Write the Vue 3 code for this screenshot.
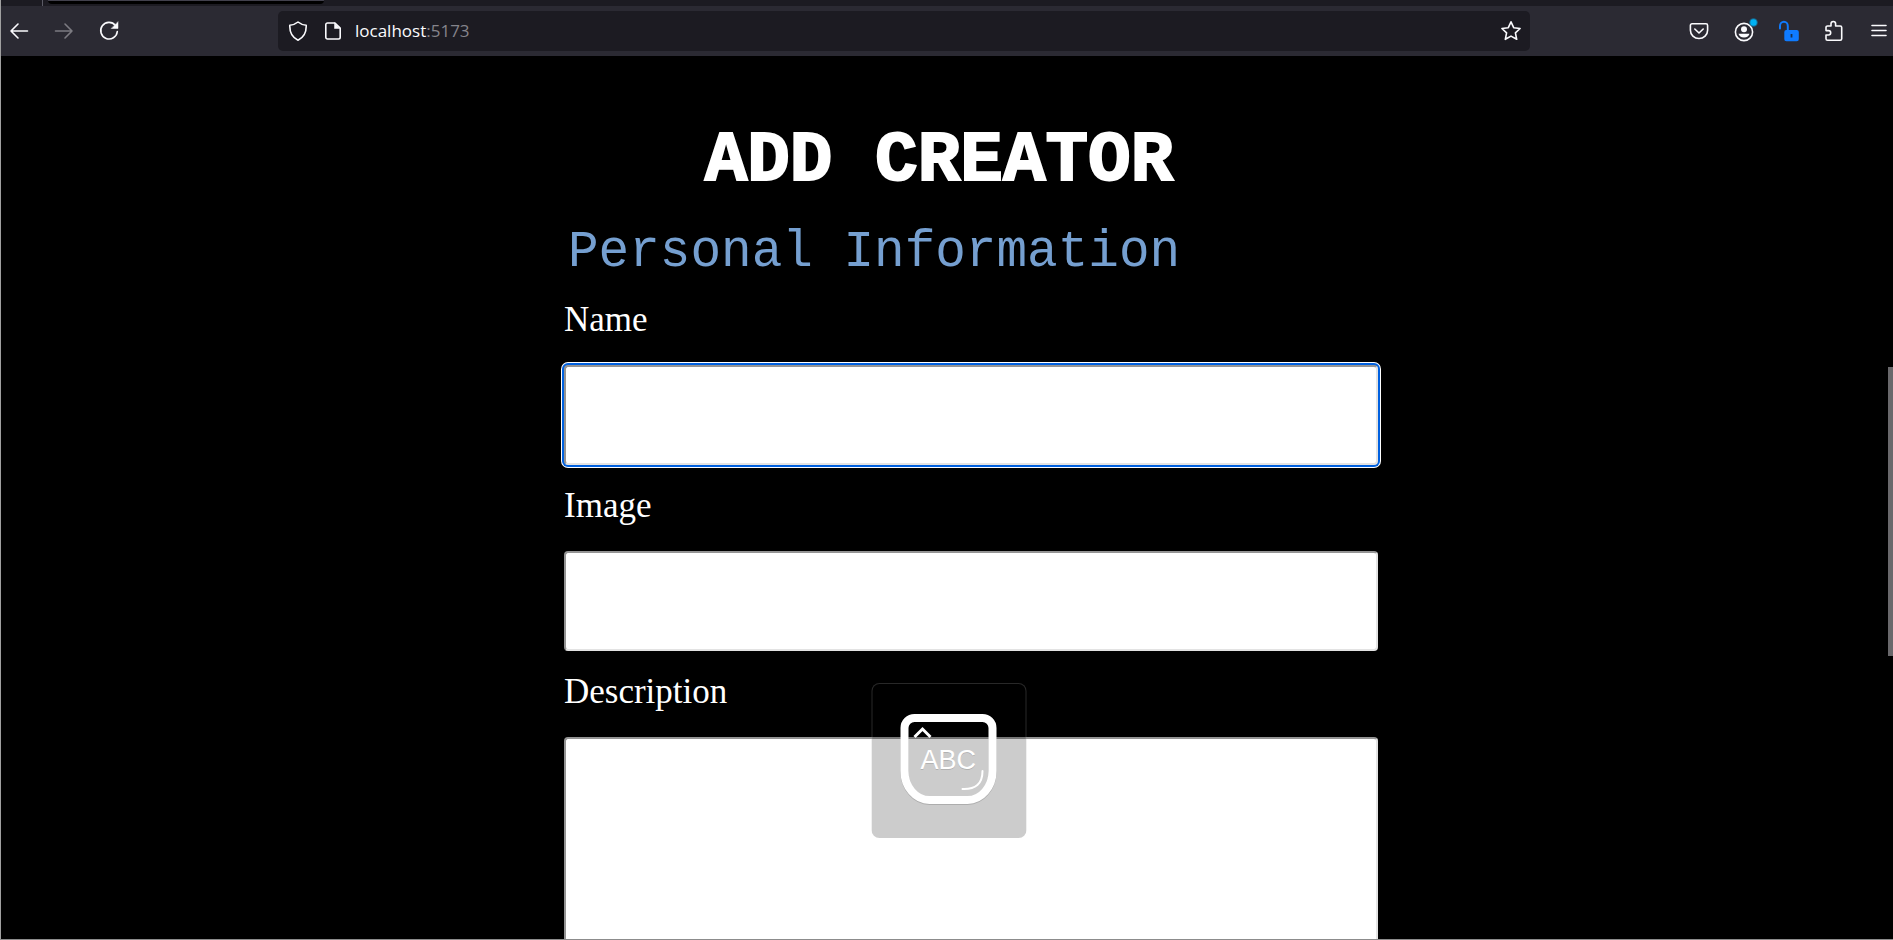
<script setup>
import { ref } from 'vue'

const name = ref('')
const image = ref('')
const description = ref('')
const active = ref('name')
</script>

<template>
  <div class="window">
    <div class="tabstrip">
      <div class="pinned"></div>
      <div class="tab"></div>
    </div>

    <nav class="toolbar" aria-label="Browser toolbar">
      <div class="group">
        <button type="button" aria-label="Back">
          <svg width="20" height="20" viewBox="0 0 20 20" class="line"><path d="M18.5 10H2M9 3L2 10l7 7" /></svg>
        </button>
        <button type="button" aria-label="Forward" disabled>
          <svg width="20" height="20" viewBox="0 0 20 20" class="line"><path d="M1.5 10H18M11 3l7 7-7 7" /></svg>
        </button>
        <button type="button" aria-label="Reload">
          <svg width="20" height="20" viewBox="0 0 20 20" class="line">
            <path d="M16.5 4.5A8.3 8.3 0 1 0 18.3 10.5" />
            <path d="M19 1v6.5h-6.5z" class="solid" />
          </svg>
        </button>
      </div>

      <div class="address">
        <svg width="20" height="20" viewBox="0 0 20 20" class="line">
          <path d="M10 1c2.300 1.900 5 2.900 8.200 3.200C18.500 11 16 16.500 10 19.200 4 16.500 1.500 11 1.800 4.200 5 3.900 7.700 2.900 10 1z" />
        </svg>
        <svg width="20" height="20" viewBox="0 0 20 20" class="line">
          <path d="M12 2H4.500A1.700 1.700 0 0 0 2.800 3.700v12.600A1.700 1.700 0 0 0 4.500 18h11a1.700 1.700 0 0 0 1.700-1.700V7z" />
          <path d="M11.500 2v5.500H17z" class="solid" />
        </svg>
        <span class="url">localhost<span class="port">:5173</span></span>
        <button type="button" aria-label="Bookmark this page">
          <svg width="22" height="22" viewBox="0 0 22 22" class="line">
            <path d="M11 1.800l2.700 5.900 6.400.8-4.700 4.400 1.300 6.400-5.700-3.200-5.700 3.200 1.300-6.400-4.700-4.400 6.400-.8z" />
          </svg>
        </button>
      </div>

      <div class="group">
        <button type="button" aria-label="Save to Pocket">
          <svg width="20" height="20" viewBox="0 0 20 20" class="line">
            <path d="M3 2.800h14a1.600 1.600 0 0 1 1.600 1.600v4.800a8.600 8.300 0 0 1-17.200 0V4.400A1.600 1.600 0 0 1 3 2.800z" />
            <path d="M5.800 8l4.200 4 4.200-4" />
          </svg>
        </button>
        <button type="button" aria-label="Account">
          <svg width="28" height="28" viewBox="0 0 28 28" class="line">
            <circle cx="14" cy="15" r="8.600" />
            <circle cx="14" cy="12.300" r="3" class="fill" />
            <path d="M8.500 16.800h11a5.600 4.500 0 0 1-11 0z" class="fill" />
            <circle cx="23.500" cy="5.500" r="4.300" class="halo" />
            <circle cx="23.500" cy="5.500" r="3.200" class="dot" />
          </svg>
        </button>
        <button type="button" aria-label="Unlocked">
          <svg width="22" height="22" viewBox="0 0 22 22" class="lock">
            <path d="M2 8.500V6a3.700 4 0 0 1 7.800 0v5" />
            <rect x="7.300" y="11" width="12.500" height="9.300" rx="1" />
            <path d="M13.500 14v3.500" class="keyhole" />
          </svg>
        </button>
        <button type="button" aria-label="Extensions">
          <svg width="22" height="22" viewBox="0 0 22 22" class="line">
            <path d="M3 7.500A1.500 1.500 0 0 1 4.500 6H8V3.800a2.300 2.300 0 0 1 4.600 0V6h4.600a1.500 1.500 0 0 1 1.500 1.500v11.300a1.500 1.500 0 0 1-1.500 1.500H4.500A1.500 1.500 0 0 1 3 18.800V15h2.500a2.200 2.200 0 0 0 0-4.400H3z" />
          </svg>
        </button>
        <button type="button" aria-label="Open application menu">
          <svg width="16" height="16" viewBox="0 0 16 16" class="line"><path d="M1 2.500h14M1 7.500h14M1 12.500h14" /></svg>
        </button>
      </div>
    </nav>

    <main class="page">
      <form @submit.prevent>
        <h1>ADD CREATOR</h1>
        <h2>Personal Information</h2>

        <label for="creator-name">Name</label>
        <input id="creator-name" v-model="name" type="text" :class="{ active: active === 'name' }" @focus="active = 'name'" />

        <label for="creator-image">Image</label>
        <input id="creator-image" v-model="image" type="text" :class="{ active: active === 'image' }" @focus="active = 'image'" />

        <label for="creator-description">Description</label>
        <textarea id="creator-description" v-model="description" :class="{ active: active === 'description' }" @focus="active = 'description'"></textarea>
      </form>
      <div class="scroll-thumb"></div>
    </main>

    <div class="caps-notice">
      <svg width="102" height="98" viewBox="0 0 102 98">
        <path class="key-shadow" d="M17 8h68a10 10 0 0 1 10 10v43a25 29 0 0 1-25 29H32A25 29 0 0 1 7 61V18a10 10 0 0 1 10-10z" />
        <path class="key" d="M17 7h68a10 10 0 0 1 10 10v43a25 29 0 0 1-25 29H32A25 29 0 0 1 7 60V17a10 10 0 0 1 10-10z" />
        <path class="caret" d="M17 26l8-8 8 8" />
        <text x="23" y="59" class="abc shade">ABC</text>
        <text x="23" y="58" class="abc">ABC</text>
        <path class="shine" d="M85 60c0 13-7 18.500-20 18" />
      </svg>
    </div>
  </div>
</template>

<style>
body {
  margin: 0;
  background: #000;
}
</style>

<style scoped>
.window {
  box-sizing: border-box;
  position: relative;
  display: flex;
  flex-direction: column;
  height: 100vh;
  overflow: hidden;
  background: #000;
  border-bottom: 1px solid #8c8c8c;
}
.window::before {
  content: '';
  position: absolute;
  z-index: 1;
  inset: 0 auto 0 0;
  width: 1px;
  background: #a0a0a0;
}
.tabstrip {
  display: flex;
  flex: none;
  gap: 5px;
  height: 6px;
  background: #1c1b22;
}
.pinned {
  width: 42px;
  border-right: 1px solid #5b5b66;
}
.tab {
  box-sizing: border-box;
  width: 276px;
  height: 4px;
  background: #000;
  border-top: 1px solid #42414d;
  border-radius: 0 0 4px 4px;
}
.toolbar {
  display: flex;
  flex: none;
  align-items: center;
  gap: 155px;
  height: 50px;
  padding-left: 5px;
  background: #2b2a33;
}
.group {
  display: flex;
  flex: none;
  gap: 17px;
}
button {
  display: flex;
  align-items: center;
  justify-content: center;
  width: 28px;
  height: 28px;
  padding: 0;
  border: 0;
  background: none;
  color: #fbfbfe;
}
button:disabled {
  color: #7c7b82;
}
svg {
  flex: none;
}
.line {
  fill: none;
  stroke: currentColor;
  stroke-width: 1.6;
  stroke-linecap: round;
  stroke-linejoin: round;
}
.line .solid {
  fill: currentColor;
  stroke-width: 0.5;
}
.line .fill {
  fill: currentColor;
  stroke: none;
}
.line .halo {
  fill: #17698f;
  stroke: none;
}
.line .dot {
  fill: #00b3f4;
  stroke: none;
}
.lock {
  fill: none;
  stroke: #0f7bff;
  stroke-width: 2;
  stroke-linecap: round;
}
.lock rect {
  fill: #0f7bff;
}
.lock .keyhole {
  stroke: #17304f;
  stroke-width: 1.8;
  stroke-linecap: butt;
}
.address {
  box-sizing: border-box;
  display: flex;
  flex: 1;
  align-items: center;
  gap: 15px;
  height: 40px;
  padding: 0 5px 0 10px;
  border-radius: 5px;
  background: #1c1b22;
  color: #fbfbfe;
}
.url {
  flex: 1;
  margin-left: -3px;
  font: 17px/24px "Open Sans", "Noto Sans", sans-serif;
}
.port {
  color: #85848b;
}
.page {
  position: relative;
  flex: 1;
  min-height: 0;
  padding: 68px 0 0 49px;
  overflow: hidden;
  color: #fff;
}
form {
  display: flex;
  flex-direction: column;
  max-width: 814px;
  margin: 0 auto;
}
h1 {
  margin: 0 64px 0 0;
  font: bold 71px/74px "Liberation Mono", monospace;
  text-align: center;
  -webkit-text-stroke: 2px #fff;
}
h2 {
  margin: 28px 0 20px;
  padding-left: 4px;
  font: 51px/54px "Liberation Mono", monospace;
  color: #759fd0;
}
label {
  margin-bottom: 25px;
  font: 35px/40px "Liberation Serif", serif;
}
input,
textarea {
  box-sizing: border-box;
  width: 100%;
  height: 100px;
  margin: 0 0 21px;
  padding: 8px;
  border: 2px solid;
  border-color: #949494 #e3e3e3 #e3e3e3 #949494;
  border-radius: 4px;
  outline: none;
  background: #fff;
  color: #000;
  font: 35px/40px "Liberation Serif", serif;
}
textarea {
  height: 300px;
  resize: none;
}
.active {
  box-shadow: 0 0 0 2px #0060df, 0 0 0 3px #fff;
}
.scroll-thumb {
  position: absolute;
  top: 311px;
  right: 0;
  width: 5px;
  height: 289px;
  background: #69686b;
}
.caps-notice {
  box-sizing: border-box;
  position: absolute;
  bottom: 101px;
  left: calc(50% + 2px);
  display: flex;
  justify-content: center;
  width: 155px;
  height: 155px;
  padding-top: 27px;
  transform: translateX(-50%);
  border: 1px solid rgba(200, 200, 200, 0.2);
  border-radius: 8px;
  background: rgba(0, 0, 0, 0.2);
}
.key,
.key-shadow {
  fill: none;
  stroke: #fff;
  stroke-width: 8;
}
.key-shadow {
  stroke: rgba(0, 0, 0, 0.15);
}
.caret,
.shine {
  fill: none;
  stroke: #fff;
  stroke-width: 3;
}
.shine {
  stroke-width: 2;
  stroke-linecap: round;
}
.abc {
  fill: #fff;
  font: 27px "Liberation Sans", sans-serif;
}
.shade {
  fill: rgba(0, 0, 0, 0.15);
}
</style>
